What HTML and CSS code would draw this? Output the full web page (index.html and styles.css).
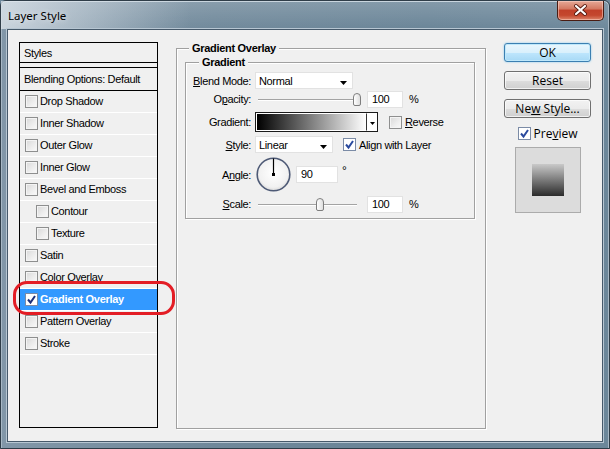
FILE: index.html
```html
<!DOCTYPE html>
<html>
<head>
<meta charset="utf-8">
<link rel="stylesheet" href="styles.css">
</head>
<body>
<div class="window">
  <div class="titlebar">
    <span class="title">Layer Style</span>
    <div class="close">
      <svg width="47" height="20" viewBox="0 0 47 20">
        <path d="M19 6 L28 14 M28 6 L19 14" stroke="#5a1d12" stroke-width="4" stroke-linecap="round"/>
        <path d="M19 6 L28 14 M28 6 L19 14" stroke="#fff" stroke-width="2.2" stroke-linecap="round"/>
      </svg>
    </div>
  </div>
  <div class="client">
    <div class="styles-list">
      <div class="list-head">Styles</div>
      <div class="list-blend">Blending Options: Default</div>
      <div class="item"><span class="cb"></span>Drop Shadow</div>
      <div class="item"><span class="cb"></span>Inner Shadow</div>
      <div class="item"><span class="cb"></span>Outer Glow</div>
      <div class="item"><span class="cb"></span>Inner Glow</div>
      <div class="item"><span class="cb"></span>Bevel and Emboss</div>
      <div class="item sub"><span class="cb"></span>Contour</div>
      <div class="item sub"><span class="cb"></span>Texture</div>
      <div class="item"><span class="cb"></span>Satin</div>
      <div class="item"><span class="cb"></span>Color Overlay</div>
      <div class="item selected"><span class="cb on"><svg width="11" height="11" viewBox="0 0 11 11"><path d="M2 5.5 L4.5 8.5 L9 2" fill="none" stroke="#1c2f7a" stroke-width="2"/></svg></span>Gradient Overlay</div>
      <div class="item"><span class="cb"></span>Pattern Overlay</div>
      <div class="item"><span class="cb"></span>Stroke</div>
    </div>

    <div class="group main-group">
      <span class="legend">Gradient Overlay</span>
      <div class="group sub-group">
        <span class="legend">Gradient</span>

        <div class="row r1">
          <span class="lbl"><u>B</u>lend Mode:</span>
          <div class="select w98"><span>Normal</span><svg class="arr" width="7" height="4" viewBox="0 0 7 4"><path d="M0 0 H7 L3.5 4 Z" fill="#000"/></svg></div>
        </div>

        <div class="row r2">
          <span class="lbl">O<u>p</u>acity:</span>
          <div class="slider"><span class="thumb" style="left:98px"></span></div>
          <div class="input w36">100</div>
          <span class="unit">%</span>
        </div>

        <div class="row r3">
          <span class="lbl">Gradient:</span>
          <div class="gradpick"><span class="grad"></span><span class="gdrop"><svg width="5" height="3" viewBox="0 0 5 3"><path d="M0 0 H5 L2.5 3 Z" fill="#000"/></svg></span></div>
          <span class="cb ml11"></span>
          <span class="cblbl"><u>R</u>everse</span>
        </div>

        <div class="row r4">
          <span class="lbl"><u>S</u>tyle:</span>
          <div class="select w78"><span>Linear</span><svg class="arr" width="7" height="4" viewBox="0 0 7 4"><path d="M0 0 H7 L3.5 4 Z" fill="#000"/></svg></div>
          <span class="cb on ml10"><svg width="11" height="11" viewBox="0 0 11 11"><path d="M2 5.5 L4.5 8.5 L9 2" fill="none" stroke="#2a4a9e" stroke-width="2"/></svg></span>
          <span class="cblbl">Align with Layer</span>
        </div>

        <div class="row r5">
          <span class="lbl">A<u>n</u>gle:</span>
          <svg class="dial" width="35" height="35" viewBox="0 0 35 35">
            <defs>
              <radialGradient id="dg" cx="50%" cy="45%" r="55%">
                <stop offset="0" stop-color="#ffffff"/>
                <stop offset="0.8" stop-color="#f1f1f1"/>
                <stop offset="1" stop-color="#d8d8d8"/>
              </radialGradient>
            </defs>
            <circle cx="17.5" cy="17.5" r="16.3" fill="url(#dg)" stroke="#4e5a76" stroke-width="1.6"/>
            <line x1="17.5" y1="1.5" x2="17.5" y2="17.5" stroke="#000" stroke-width="1.2"/>
            <rect x="16" y="16" width="3" height="3" fill="#000"/>
          </svg>
          <div class="input w42 ml5">90</div>
          <span class="deg">°</span>
        </div>

        <div class="row r6">
          <span class="lbl"><u>S</u>cale:</span>
          <div class="slider"><span class="thumb" style="left:61px"></span></div>
          <div class="input w36">100</div>
          <span class="unit">%</span>
        </div>
      </div>
    </div>

    <div class="side">
      <div class="btn ok"><span>OK</span></div>
      <div class="btn"><span>Reset</span></div>
      <div class="btn"><span>Ne<u>w</u> Style...</span></div>
      <div class="preview-row">
        <span class="cb on"><svg width="11" height="11" viewBox="0 0 11 11"><path d="M2 5.5 L4.5 8.5 L9 2" fill="none" stroke="#2a4a9e" stroke-width="2"/></svg></span>
        <span>Pre<u>v</u>iew</span>
      </div>
      <div class="preview"><span class="swatch"></span></div>
    </div>

    <div class="annot"></div>
  </div>
</div>
</body>
</html>
```

FILE: styles.css
```css
* { box-sizing: border-box; }
html, body { margin: 0; padding: 0; }
body {
  width: 610px;
  height: 449px;
  overflow: hidden;
  font-family: "Liberation Sans", Arial, sans-serif;
  font-size: 11px;
  letter-spacing: -0.35px;
  color: #000;
  background: #6e889b;
}
u { text-decoration-thickness: 1px; text-underline-offset: 1px; }

.window {
  width: 610px;
  height: 449px;
  display: flex;
  flex-direction: column;
  border: 1px solid #2f3d48;
  border-radius: 6px 6px 0 0;
  background:
    linear-gradient(180deg, rgba(255,255,255,0.18) 0, rgba(255,255,255,0) 30px),
    linear-gradient(90deg, #8297a8 0%, #6f889a 35%, #698497 70%, #6c879a 100%);
  box-shadow: inset 0 1px 0 #c9d5de, inset 1px 0 0 #a8b8c5, inset -1px 0 0 #a8b8c5;
}

.titlebar {
  height: 28px;
  flex: none;
  display: flex;
  align-items: center;
  padding-left: 7px;
  background: linear-gradient(90deg, rgba(225,232,238,0.75) 0, rgba(225,232,238,0.45) 70px, rgba(225,232,238,0) 190px);
}
.title {
  font-family: "Noto Sans", "Open Sans", sans-serif;
  font-size: 11.5px;
  letter-spacing: 0;
  color: #000;
  text-shadow: 0 0 6px rgba(255,255,255,0.8);
}
.close {
  margin-left: auto;
  margin-right: 5px;
  align-self: flex-start;
  width: 47px;
  height: 20px;
  border: 1px solid #4a1c12;
  border-top: none;
  border-radius: 0 0 5px 5px;
  background: linear-gradient(180deg, #e6a896 0%, #d47a63 40%, #c1412a 50%, #c4472e 75%, #dc8469 100%);
  box-shadow: inset 0 0 0 1px rgba(255,220,210,0.5);
  overflow: hidden;
}
.close svg { display: block; margin: -1px 0 0 -1px; }

.client {
  position: relative;
  flex: 1;
  margin: 0 6px 6px 6px;
  border: 1px solid #46596a;
  box-shadow: 0 0 0 1px #b7c6d2;
  background: #f0f0f0;
  display: flex;
  align-items: flex-start;
  padding: 12px 0 0 11px;
}

/* Styles list */
.styles-list {
  width: 139px;
  height: 386px;
  flex: none;
  border: 1px solid #000;
  background: #f0f0f0;
}
.list-head {
  height: 20px;
  border-bottom: 1px solid #000;
  padding-left: 4px;
  line-height: 20px;
}
.list-blend {
  margin-top: 4px;
  height: 24px;
  border-top: 1px solid #000;
  border-bottom: 1px solid #000;
  padding-left: 4px;
  line-height: 22px;
}
.item {
  height: 22px;
  border-bottom: 1px solid #fff;
  display: flex;
  align-items: center;
  padding-left: 5px;
  padding-bottom: 1px;
}
.item.sub { padding-left: 16px; }
.item .cb { margin-right: 2px; }
.item.selected {
  background: #3399ff;
  color: #fff;
  font-weight: bold;
  letter-spacing: -0.3px;
}

.cb {
  width: 13px;
  height: 13px;
  flex: none;
  display: inline-block;
  border: 1px solid #8e8f8f;
  background: linear-gradient(135deg, #d8d8d8 0%, #eeeeee 60%, #fafafa 100%);
  box-shadow: inset 0 0 0 1px #f4f4f4;
}
.cb.on {
  background: #fff;
  box-shadow: none;
  border-color: #7b8ba6;
}
.cb svg { display: block; }

/* Groups */
.group {
  position: relative;
  border: 1px solid #a0a0a0;
  box-shadow: inset 1px 1px 0 #fff, 1px 1px 0 #fff;
}
.legend {
  position: absolute;
  top: -8px;
  background: #f0f0f0;
  padding: 0 3px;
  font-weight: bold;
  line-height: 14px;
  letter-spacing: -0.3px;
}
.main-group {
  width: 310px;
  height: 381px;
  flex: none;
  margin: 6px 0 0 18px;
}
.main-group > .legend { left: 12px; }
.sub-group {
  margin: 13px 10px 0 8px;
  height: 157px;
  padding-top: 9px;
}
.sub-group > .legend { left: 13px; }

.row {
  display: flex;
  align-items: center;
}
.r1 { height: 17px; }
.r2 { height: 16px; margin-top: 2px; }
.r3 { height: 20px; margin-top: 5px; }
.r4 { height: 17px; margin-top: 4px; }
.r5 { height: 35px; margin-top: 4px; }
.r6 { height: 18px; margin-top: 3px; }

.lbl {
  width: 65px;
  flex: none;
  text-align: right;
  margin-right: 4px;
}
.select {
  height: 17px;
  background: #fff;
  border: 1px solid #e2e2e2;
  display: flex;
  align-items: center;
  padding-left: 3px;
  position: relative;
}
.select .arr { margin-left: auto; margin-right: 5px; margin-top: 5px; }
.w98 { width: 98px; }
.w78 { width: 78px; }
.w36 { width: 36px; }
.w42 { width: 42px; }
.input {
  height: 17px;
  background: #fff;
  border: 1px solid #e2e2e2;
  padding-left: 4px;
  line-height: 15px;
  margin-left: 6px;
}
.ml5 { margin-left: 5px; }
.ml10 { margin-left: 10px; }
.ml11 { margin-left: 11px; }
.unit { margin-left: 6px; }
.deg { margin-left: 4px; align-self: flex-start; margin-top: 7px; font-size: 12px; }
.cblbl { margin-left: 3px; }

.slider {
  position: relative;
  width: 106px;
  height: 16px;
  flex: none;
}
.slider::before {
  content: "";
  position: absolute;
  left: 3px;
  right: 4px;
  top: 8px;
  height: 1px;
  background: #a3a3a3;
  box-shadow: 0 1px 0 #fff;
}
.thumb {
  position: absolute;
  top: 2px;
  width: 8px;
  height: 13px;
  border: 1px solid #7e7e7e;
  border-radius: 4px 4px 2px 2px;
  background: linear-gradient(90deg, #ffffff, #dedede);
}

.gradpick {
  width: 123px;
  height: 20px;
  border: 1px solid #1b1b1b;
  display: flex;
  background: #fff;
}
.grad {
  flex: 1;
  background: linear-gradient(90deg, #000 0%, #fff 100%);
  border: 1px solid #fff;
  border-right: 1px solid #333;
}
.gdrop {
  width: 10px;
  display: flex;
  align-items: center;
  justify-content: center;
  padding-top: 2px;
}
.gdrop svg { display: block; }

.dial { display: block; flex: none; margin-left: 1px; }

/* Side */
.side {
  width: 87px;
  flex: none;
  margin: 1px 0 0 18px;
  display: flex;
  flex-direction: column;
  align-items: center;
  font-family: "Open Sans", "Noto Sans", sans-serif;
  font-size: 12px;
  letter-spacing: 0;
}
.btn {
  width: 87px;
  height: 19px;
  border: 1px solid #707070;
  border-radius: 3px;
  background: linear-gradient(180deg, #f2f2f2 0%, #ebebeb 50%, #dddddd 51%, #cfcfcf 100%);
  box-shadow: inset 0 0 0 1px rgba(255,255,255,0.7);
  display: flex;
  align-items: center;
  justify-content: center;
  line-height: 17px;
  margin-bottom: 9px;
}
.btn.ok {
  border-color: #3c7fb1;
  background: linear-gradient(180deg, #eaf6fd 0%, #d9f0fc 50%, #bee6fd 51%, #a7d9f5 100%);
  box-shadow: inset 0 0 0 1px #bfe8fb, 0 0 2px #7cc6ef;
}
.preview-row {
  display: flex;
  align-items: center;
  height: 14px;
  gap: 3px;
  margin-top: -1px;
}
.preview {
  margin-top: 7px;
  width: 66px;
  height: 66px;
  border: 1px solid #ababab;
  background: #dcdcdc;
  display: flex;
  align-items: center;
  justify-content: center;
}
.swatch {
  width: 32px;
  height: 32px;
  background: linear-gradient(180deg, #c9c9c9 0%, #2b2b2b 100%);
}

.annot {
  position: absolute;
  left: 5px;
  top: 251px;
  width: 162px;
  height: 34px;
  border: 3px solid #e31d25;
  border-radius: 14px;
}
```
